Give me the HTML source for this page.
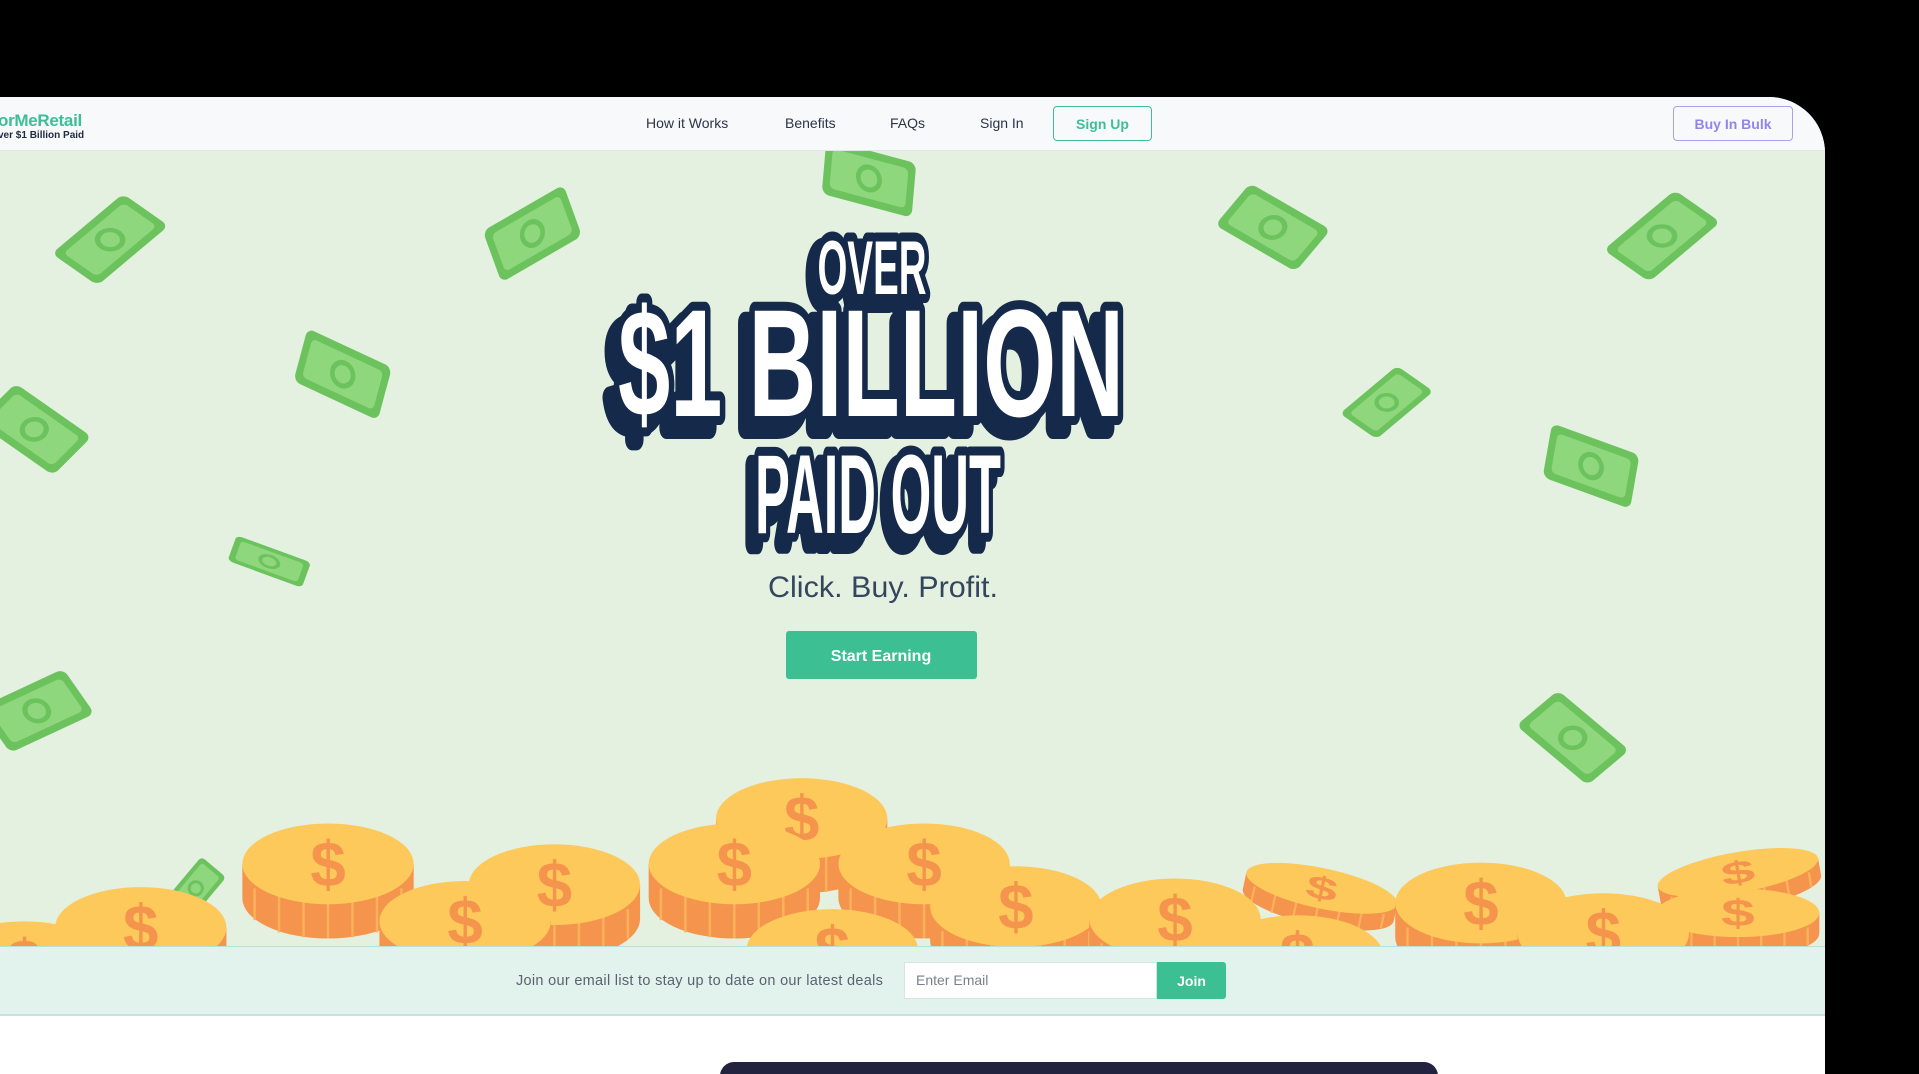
<!DOCTYPE html>
<html><head><meta charset="utf-8"><style>
*{margin:0;padding:0;box-sizing:border-box}
html,body{width:1919px;height:1074px;overflow:hidden;background:#000;font-family:"Liberation Sans",sans-serif}
#card{position:absolute;left:0;top:97px;width:1825px;height:977px;background:#fff;border-top-right-radius:56px;overflow:hidden}
#nav{position:absolute;left:0;top:0;width:100%;height:54px;background:#f7f9fb;border-bottom:1px solid #dfe6e3}
.ni{position:absolute;top:18px;font-size:14px;color:#2b3346}
.btn{position:absolute;top:9px;height:35px;border-radius:4px;font-size:14px;font-weight:bold;display:flex;align-items:center;justify-content:center}
#hero{position:absolute;left:0;top:54px;width:100%;height:795px;background:#e4f1e0;overflow:hidden}
#strip{position:absolute;left:0;top:849px;width:100%;height:70px;background:#e2f3ee;border-top:1px solid #b9e0d8;border-bottom:2px solid #c3e3dc}
</style></head><body>
<div id="card">
 <div id="nav">
  <div style="position:absolute;left:-2px;top:14px;font-size:17px;font-weight:bold;color:#3dbf94;letter-spacing:-0.3px">orMeRetail</div>
  <div style="position:absolute;left:-2px;top:33px;font-size:10px;font-weight:bold;color:#1e2a40">ver $1 Billion Paid</div>
  <div class="ni" style="left:646px">How it Works</div>
  <div class="ni" style="left:785px">Benefits</div>
  <div class="ni" style="left:890px">FAQs</div>
  <div class="ni" style="left:980px">Sign In</div>
  <div class="btn" style="left:1053px;width:99px;border:1.5px solid #3dbf94;color:#3dbf94">Sign Up</div>
  <div class="btn" style="left:1673px;width:120px;border:1.5px solid #a8a2f0;color:#8f86ec">Buy In Bulk</div>
 </div>
 <div id="hero">
 <svg width="1825" height="795" viewBox="0 0 1825 795" style="position:absolute;left:0;top:0">
  <defs>
   <g id="bill"><rect x="-38" y="-22" width="76" height="44" rx="6" fill="#6cc35d"/><rect x="-32" y="-16" width="64" height="32" rx="4" fill="#8fd77d"/><circle cx="0" cy="0" r="11" fill="#6cc35d"/><circle cx="0" cy="0" r="7" fill="#8fd77d"/></g>
   <g id="coin"><path d="M-70 0 V28 A70 33 0 0 0 70 28 V0 Z" fill="#f5944d"/><path d="M-60 20 v26 M-40 26 v30 M-20 30 v30 M0 31 v30 M20 30 v30 M40 26 v30 M60 20 v24" stroke="#fbb25a" stroke-width="2"/><ellipse cx="0" cy="0" rx="70" ry="33" fill="#fdc95a"/><text x="0" y="18" text-anchor="middle" font-family="Liberation Sans" font-weight="bold" font-size="52" fill="#f5944d">$</text></g>
  </defs>
  <g transform="translate(0,-150) scale(1.2239)">
   <use href="#bill" transform="translate(90,195) rotate(-40) skewX(15)"/>
   <use href="#bill" transform="translate(435,190) rotate(-30) skewX(-10)"/>
   <use href="#bill" transform="translate(710,145) rotate(15) skewX(10)"/>
   <use href="#bill" transform="translate(1040,185) rotate(30) skewX(-10)"/>
   <use href="#bill" transform="translate(1358,192) rotate(-40) skewX(15)"/>
   <use href="#bill" transform="translate(280,305) rotate(25) skewX(10)"/>
   <use href="#bill" transform="translate(28,350) rotate(35) skewX(-10)"/>
   <use href="#bill" transform="translate(1133,328) rotate(-40) skewX(15) scale(0.8)"/>
   <use href="#bill" transform="translate(1300,380) rotate(20) skewX(10)"/>
   <use href="#bill" transform="translate(220,458) rotate(20) scale(0.85,0.5)"/>
   <use href="#bill" transform="translate(30,580) rotate(-25) skewX(10)"/>
   <use href="#bill" transform="translate(1285,602) rotate(40) skewX(-10)"/>
   <use href="#bill" transform="translate(160,725) rotate(-50) scale(0.6)"/>
   <use href="#coin" transform="translate(655,668)"/>
   <use href="#coin" transform="translate(268,705)"/>
   <use href="#coin" transform="translate(1420,712) rotate(-10) scale(0.95,0.5)"/>
   <use href="#coin" transform="translate(1080,725) rotate(12) scale(0.9,0.5)"/>
   <use href="#coin" transform="translate(600,705)"/>
   <use href="#coin" transform="translate(755,705)"/>
   <use href="#coin" transform="translate(830,740)"/>
   <use href="#coin" transform="translate(453,722)"/>
   <use href="#coin" transform="translate(1210,737)"/>
   <use href="#coin" transform="translate(1420,745) scale(0.95,0.6)"/>
   <use href="#coin" transform="translate(960,750)"/>
   <use href="#coin" transform="translate(380,752)"/>
   <use href="#coin" transform="translate(115,757)"/>
   <use href="#coin" transform="translate(1310,762)"/>
   <use href="#coin" transform="translate(680,775)"/>
   <use href="#coin" transform="translate(1060,780)"/>
   <use href="#coin" transform="translate(20,785)"/>
  </g>
  <g font-family="Liberation Sans Narrow,Liberation Sans,sans-serif" font-weight="bold" text-anchor="middle" stroke-linejoin="round">
   <g fill="#15294a" stroke="#15294a" stroke-width="22">
    <text x="864" y="151" font-size="76" textLength="109" lengthAdjust="spacingAndGlyphs">OVER</text>
    <text x="861" y="277" font-size="153" textLength="506" lengthAdjust="spacingAndGlyphs">$1 BILLION</text>
    <text x="870" y="392" font-size="112" textLength="246" lengthAdjust="spacingAndGlyphs">PAID OUT</text>
   </g>
   <g fill="#fff" stroke="#15294a" stroke-width="18" paint-order="stroke">
    <text x="872" y="143" font-size="76" textLength="109" lengthAdjust="spacingAndGlyphs">OVER</text>
    <text x="871" y="265" font-size="153" textLength="506" lengthAdjust="spacingAndGlyphs">$1 BILLION</text>
    <text x="878" y="382" font-size="112" textLength="246" lengthAdjust="spacingAndGlyphs">PAID OUT</text>
   </g>
  </g>
  <text x="883" y="446" text-anchor="middle" font-family="Liberation Sans" font-size="30" fill="#34455e" textLength="230" lengthAdjust="spacingAndGlyphs">Click. Buy. Profit.</text>
  <rect x="786" y="480" width="191" height="48" rx="3" fill="#3dbf94"/>
  <text x="881" y="510" text-anchor="middle" font-family="Liberation Sans" font-weight="bold" font-size="16" fill="#fff">Start Earning</text>
 </svg>
 </div>
 <div id="strip">
  <div style="position:absolute;left:516px;top:26px;font-size:14.5px;letter-spacing:0.3px;color:#5a6270">Join our email list to stay up to date on our latest deals</div>
  <div style="position:absolute;left:904px;top:15px;width:253px;height:37px;background:#fff;border:1px solid #d5e6e0;font-size:14px;color:#7a808a;padding:9px 11px">Enter Email</div>
  <div style="position:absolute;left:1157px;top:15px;width:69px;height:37px;background:#3dbf94;color:#fff;font-weight:bold;font-size:14px;display:flex;align-items:center;justify-content:center;border-radius:0 3px 3px 0">Join</div>
 </div>
 <div style="position:absolute;left:720px;top:965px;width:718px;height:40px;background:#22243f;border-radius:14px 14px 0 0"></div>
</div>
</body></html>
